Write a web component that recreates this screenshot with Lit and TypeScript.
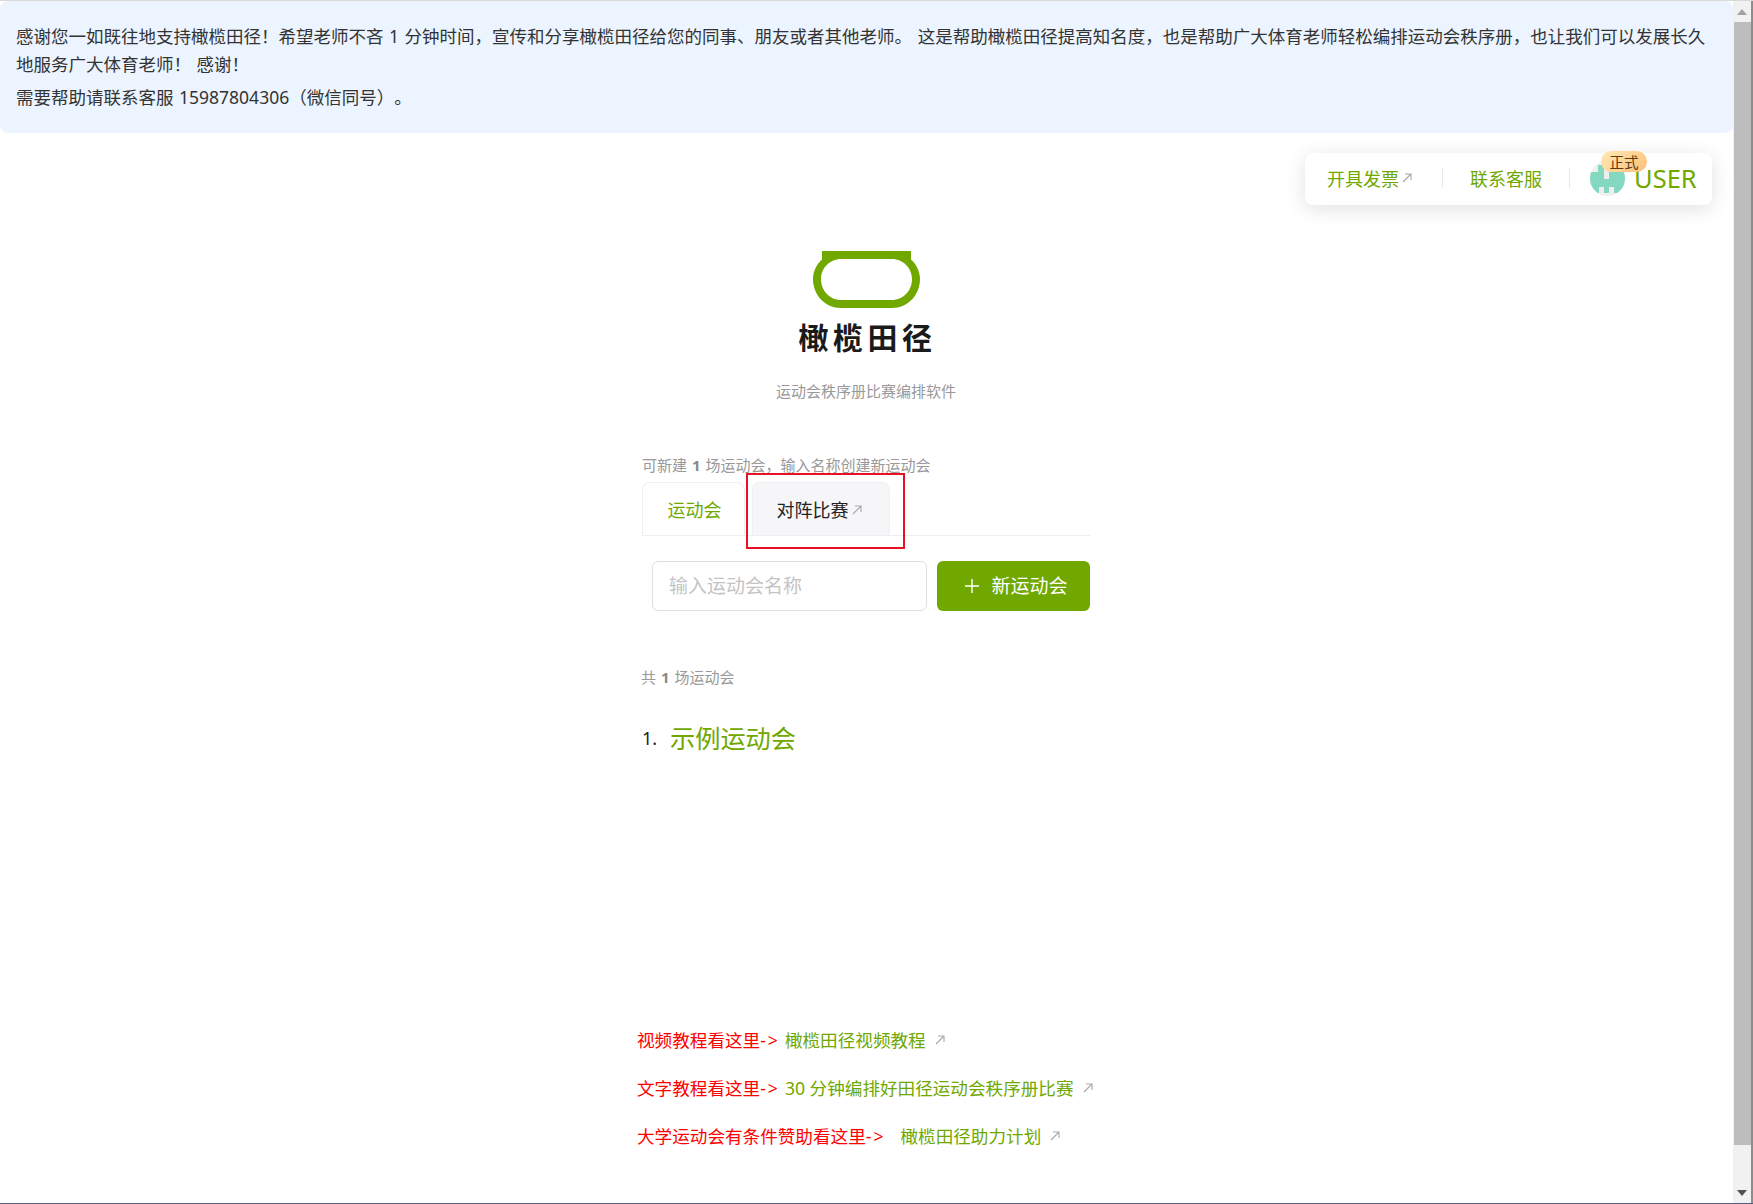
import { LitElement, html, css, svg } from "lit";
import { customElement } from "lit/decorators.js";

const arrow = (cls = "arrow") => html`<svg class=${cls} viewBox="0 0 10 10" aria-hidden="true"><path d="M1 9 L9 1 M3 1 H9 V7" fill="none" stroke="currentColor" stroke-width="1.1"/></svg>`;

@customElement("app-root")
export class AppRoot extends LitElement {
  static styles = css`
    :host { display: block; width: 1753px; height: 1204px; overflow: hidden; background: #fff; font-family: "Noto Sans", "Noto Sans CJK SC", sans-serif; color: #333; text-spacing-trim: space-all; }
    * { box-sizing: border-box; }
    a { color: #70a800; text-decoration: none; }
    .window { display: flex; height: 1204px; border-top: 1px solid #d9d9d9; border-bottom: 1px solid #5b5f7d; }
    .page { width: 1733px; flex: none; display: flex; flex-direction: column; }
    .scroll { width: 20px; flex: none; display: flex; flex-direction: column; background: #f1f1f1; border-right: 2px solid #8d8d8d; }
    .sbtn { height: 21px; display: flex; align-items: center; justify-content: center; flex: none; }
    .sbtn svg { width: 10px; height: 6px; fill: #505050; }
    .sbtn.up svg { fill: #a3a3a3; }
    .thumb { height: 1123px; flex: none; background: #bdbdbd; margin-left: 1px; }
    .fill { flex: 1; }
    .alert { height: 132px; flex: none; background: #ebf4ff; border-radius: 8px; padding: 21px 16px 0; font-size: 17.5px; line-height: 28px; color: #333; word-spacing: 1px; }
    .alert p { margin: 0 0 5px; }
    .bar { display: flex; justify-content: flex-end; padding: 20px 21px 0 0; }
    .card { position: relative; display: flex; align-items: center; width: 407px; height: 52px; background: #fff; border-radius: 8px; box-shadow: 0 4px 20px rgba(0, 0, 0, .12); padding: 0 0 2px 22px; font-size: 18px; line-height: 26px; }
    .card > a { padding-top: 2px; }
    .arrow { width: 10px; height: 10px; color: #a8a8ac; flex: none; }
    .card .arrow { margin-left: 3px; }
    .sep { width: 1px; height: 20px; background: #e6e8ee; flex: none; }
    .s1 { margin: 0 27px 0 30px; }
    .s2 { margin: 0 20px 0 27px; }
    .user { display: flex; align-items: center; gap: 9px; font-size: 25.5px; color: #70a800; }
    .avatar { position: relative; width: 35px; height: 35px; flex: none; }
    .avatar svg { width: 35px; height: 35px; display: block; }
    .badge { position: absolute; left: 11px; top: -10px; width: 46px; height: 21px; border-radius: 11px; background: linear-gradient(135deg, #ffe9b4, #ffc078); color: #5b3a12; font: 14.5px/21px "Noto Sans CJK SC", sans-serif; text-align: center; }
    .center { width: 448px; margin: 0 auto; display: flex; flex-direction: column; position: relative; left: -0.5px; }
    .logo { display: flex; flex-direction: column; align-items: center; margin-top: 46px; }
    .logo svg { width: 107px; height: 57px; display: block; }
    .brand { font-size: 30px; line-height: 38px; margin-top: 11px; font-weight: 700; color: #1a1a1a; letter-spacing: 4.5px; padding-left: 3px; }
    .sub { font-size: 15px; line-height: 20px; color: #999; margin-top: 24px; }
    .hint { font-size: 15px; line-height: 20px; color: #999; margin-top: 54px; word-spacing: 1px; }
    .hint b { color: #888; }
    .tabs { position: relative; display: flex; height: 54px; border-bottom: 1px solid #eceef2; margin-top: 7px; gap: 7px; }
    .tab { display: flex; align-items: center; justify-content: center; height: 53px; font-size: 18px; line-height: 26px; padding-top: 2px; border: 1px solid #f0f0f3; border-bottom: 0; border-radius: 8px 8px 0 0; }
    .tab.on { width: 103px; color: #70a800; background: #fff; border-color: #f0f0f3; padding-left: 2px; }
    .tab.off { width: 138px; background: #f6f6f8; color: #222; gap: 3px; padding-right: 4px; }
    .mark { position: absolute; left: 104px; top: -9px; width: 159px; height: 76px; border: 2px solid #e81123; }
    .create { display: flex; gap: 10px; padding-left: 10px; margin-top: 25px; }
    .input { width: 275px; height: 50px; border: 1px solid #dcdfe6; border-radius: 6px; padding: 0 16px; font-size: 19px; line-height: 49px; color: #c4c4c4; }
    .btn { width: 153px; height: 50px; background: #70a800; border-radius: 6px; color: #fff; display: flex; align-items: center; justify-content: center; gap: 11px; font-size: 19px; line-height: 26px; padding: 0 0 0 5px; }
    .btn svg { width: 16px; height: 16px; }
    .total { font-size: 15px; line-height: 20px; color: #999; margin: 56px 0 0 -1px; word-spacing: 1px; }
    .total b { color: #888; }
    .event { display: flex; align-items: center; margin-top: 30px; height: 40px; font-size: 18px; color: #222; }
    .event span { width: 28px; padding-top: 2px; }
    .event a { font-size: 25.2px; }
    .links { display: flex; flex-direction: column; gap: 20px; margin: 269px 0 0 -5px; font-size: 17.6px; line-height: 28px; white-space: nowrap; }
    .links div { display: flex; align-items: center; }
    .red { color: #f00; }
    .tip { letter-spacing: 2px; }
    .links a { margin-left: 5px; }
    .links a.wide { margin-left: 15px; }
    .links .arrow { margin-left: 9px; }
  `;

  render() {
    return html`<div class="window">
      <div class="page">
        <div class="alert">
          <p>感谢您一如既往地支持橄榄田径\uFF01希望老师不吝 1 分钟时间\uFF0C宣传和分享橄榄田径给您的同事、朋友或者其他老师。 这是帮助橄榄田径提高知名度\uFF0C也是帮助广大体育老师轻松编排运动会秩序册\uFF0C也让我们可以发展长久<br />地服务广大体育老师\uFF01 感谢\uFF01</p>
          <p>需要帮助请联系客服 15987804306\uFF08微信同号\uFF09。</p>
        </div>
        <div class="bar">
          <div class="card">
            <a href="#">开具发票</a>${arrow()}
            <div class="sep s1"></div>
            <a href="#">联系客服</a>
            <div class="sep s2"></div>
            <div class="user">
              <div class="avatar">
                <svg viewBox="0 0 35 35"><defs><clipPath id="c"><circle cx="17.5" cy="17.5" r="17.5"/></clipPath></defs>
                  <circle cx="17.5" cy="17.5" r="17.5" fill="#eeeeee"/>
                  <g clip-path="url(#c)" fill="#84d8c0">
                    ${svg`<rect x="8" y="4" width="6" height="15"/><rect x="19" y="4" width="7" height="15"/><rect x="0" y="11" width="8" height="15"/><rect x="26" y="11" width="9" height="15"/><rect x="8" y="18" width="18" height="8"/><rect x="0" y="26" width="9" height="6"/><rect x="14" y="26" width="5" height="6"/><rect x="24" y="26" width="11" height="6"/>`}
                  </g>
                </svg>
                <div class="badge">正式</div>
              </div>
              <span>USER</span>
            </div>
          </div>
        </div>
        <div class="center">
          <div class="logo">
            <svg viewBox="0 0 107 57"><path d="M9 0 H98 V8.5 C103 13 107 20 107 28 C107 44 95 57 79 57 H28 C12 57 0 44 0 28 C0 20 4 13 9 8.5 Z M28 8 C17 8 8 17 8 28 C8 40 17 49 28 49 H79 C90 49 99 40 99 28 C99 17 90 8 79 8 Z" fill="#70a800" fill-rule="evenodd"/></svg>
            <div class="brand">橄榄田径</div>
            <div class="sub">运动会秩序册比赛编排软件</div>
          </div>
          <div class="hint">可新建 <b>1</b> 场运动会\uFF0C输入名称创建新运动会</div>
          <div class="tabs">
            <div class="tab on">运动会</div>
            <div class="tab off">对阵比赛${arrow()}</div>
            <div class="mark"></div>
          </div>
          <div class="create">
            <div class="input">输入运动会名称</div>
            <div class="btn"><svg viewBox="0 0 16 16"><path d="M8 1 V15 M1 8 H15" stroke="#fff" stroke-width="1.4"/></svg>新运动会</div>
          </div>
          <div class="total">共 <b>1</b> 场运动会</div>
          <div class="event"><span>1.</span><a href="#">示例运动会</a></div>
          <div class="links">
            <div><span class="red">视频教程看这里<span class="tip">-&gt;</span></span><a href="#">橄榄田径视频教程</a>${arrow()}</div>
            <div><span class="red">文字教程看这里<span class="tip">-&gt;</span></span><a href="#">30 分钟编排好田径运动会秩序册比赛</a>${arrow()}</div>
            <div><span class="red">大学运动会有条件赞助看这里<span class="tip">-&gt;</span></span><a class="wide" href="#">橄榄田径助力计划</a>${arrow()}</div>
          </div>
        </div>
      </div>
      <div class="scroll">
        <div class="sbtn up"><svg viewBox="0 0 10 6"><path d="M5 0 L10 6 H0 Z"/></svg></div>
        <div class="thumb"></div>
        <div class="fill"></div>
        <div class="sbtn"><svg viewBox="0 0 10 6"><path d="M0 0 H10 L5 6 Z"/></svg></div>
      </div>
    </div>`;
  }
}
